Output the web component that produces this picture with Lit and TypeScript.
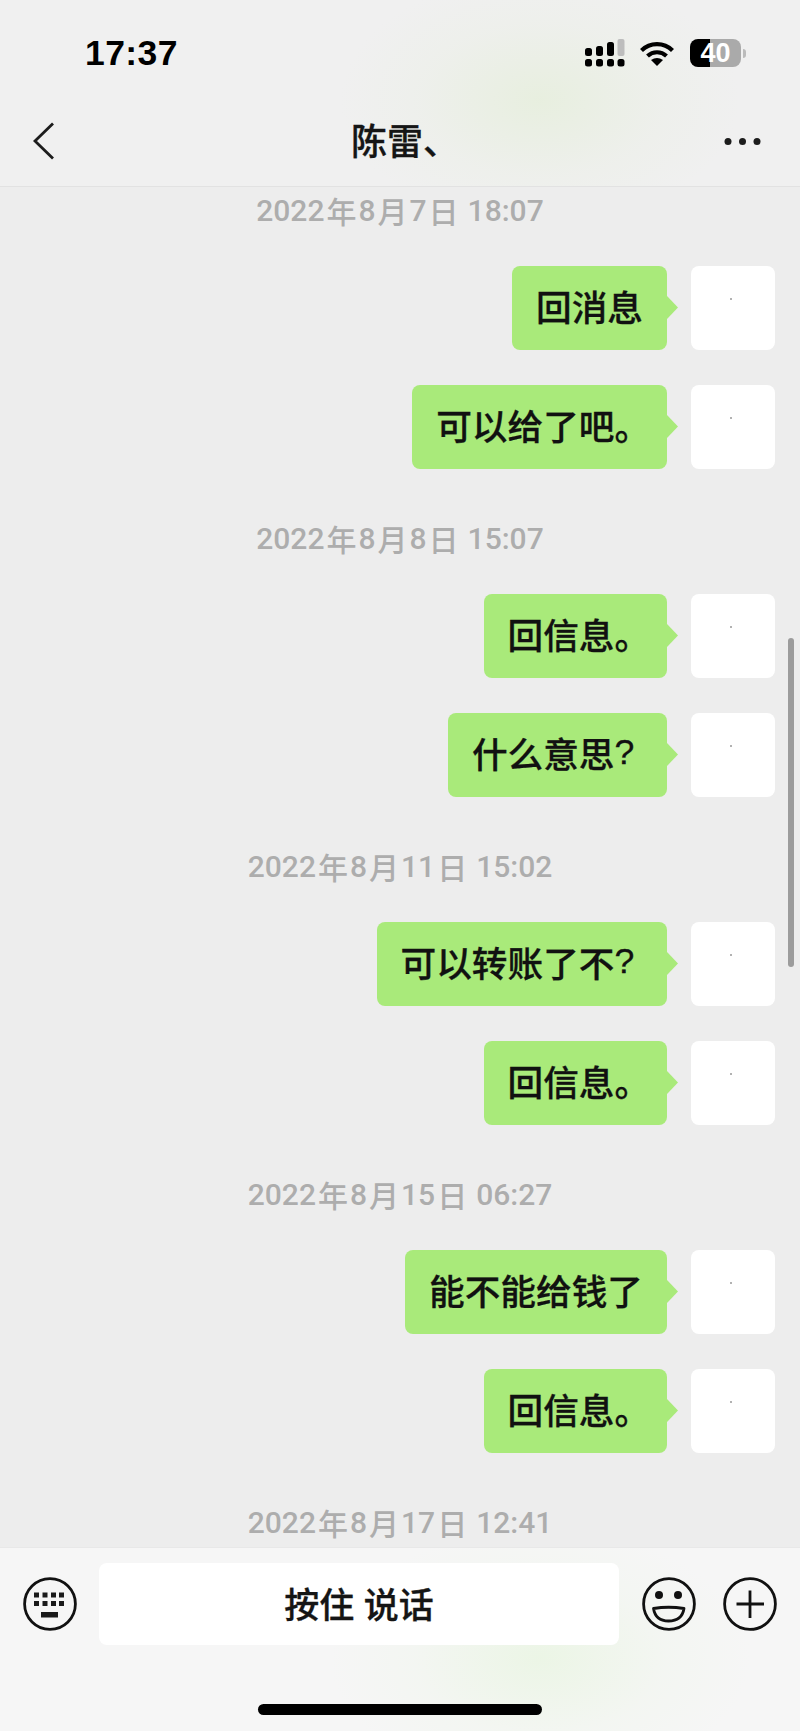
import { LitElement, html, css, svg } from "lit";
import { customElement } from "lit/decorators.js";

type Msg = { t: string; end?: string };
const groups: { ts: string[]; msgs: Msg[] }[] = [
  { ts: ["2022", "年", "8", "月", "7", "日", "18:07"], msgs: [{ t: "回消息" }, { t: "可以给了吧", end: "。" }] },
  { ts: ["2022", "年", "8", "月", "8", "日", "15:07"], msgs: [{ t: "回信息", end: "。" }, { t: "什么意思", end: "?" }] },
  { ts: ["2022", "年", "8", "月", "11", "日", "15:02"], msgs: [{ t: "可以转账了不", end: "?" }, { t: "回信息", end: "。" }] },
  { ts: ["2022", "年", "8", "月", "15", "日", "06:27"], msgs: [{ t: "能不能给钱了" }, { t: "回信息", end: "。" }] },
  { ts: ["2022", "年", "8", "月", "17", "日", "12:41"], msgs: [] },
];

@customElement("app-root")
export class AppRoot extends LitElement {
  static styles = css`
    :host {
      display: block;
      width: 800px;
      height: 1731px;
      overflow: hidden;
      font-family: "Liberation Sans", "Noto Sans CJK SC", sans-serif;
      background: #ededed;
      color: #111;
    }
    .page { position: relative; display: flex; flex-direction: column; height: 1731px; }
    .top {
      height: 186px;
      flex: none;
      border-bottom: 1px solid #e2e2e2;
      background:
        radial-gradient(ellipse 200px 125px at 540px 100px, rgba(228, 238, 216, 0.7), rgba(235, 239, 230, 0.45) 60%, rgba(240, 240, 240, 0) 100%),
        #f0f0f0;
    }
    .status { height: 106px; display: flex; align-items: center; padding: 0 54px 0 85px; }
    .time { font-size: 35.500px; font-weight: 700; color: #000; letter-spacing: 0.4px; flex: 1; }
    .signal { width: 40px; height: 28px; display: block; }
    .wifi { width: 34px; height: 25px; display: block; margin-left: 15px; }
    .battery {
      width: 51px;
      height: 28px;
      margin-left: 16px;
      border-radius: 8px;
      background: linear-gradient(90deg, #000 0 39%, #aaa 39%);
      color: #fff;
      font-size: 27px;
      font-weight: 700;
      display: flex;
      align-items: center;
      justify-content: center;
      line-height: 28px;
    }
    .nub { width: 3px; height: 9px; margin-left: 2px; background: #bbb; border-radius: 0 3px 3px 0; }
    .nav {
      height: 80px;
      box-sizing: border-box;
      padding: 0 39px 10px 33px;
      display: flex;
      align-items: center;
      justify-content: space-between;
    }
    .back { width: 22px; height: 38px; display: block; }
    .title {
      font-size: 36px;
      font-weight: 500;
      color: #151515;
      line-height: 44px;
      margin: 3px 0 0 13px;
      width: 90px;
      white-space: nowrap;
      -webkit-text-stroke: 0.3px #151515;
    }
    .dots { width: 37px; height: 9px; display: block; }
    .list { flex: 1; min-height: 0; overflow: hidden; padding-right: 25px; display: flex; flex-direction: column; }
    .ts {
      height: 46px;
      flex: none;
      display: flex;
      align-items: center;
      justify-content: center;
      gap: 2px;
      padding-left: 25px;
      font-family: Roboto, "Noto Sans CJK SC", sans-serif;
      font-size: 30px;
      font-weight: 500;
      color: #adadad;
      white-space: nowrap;
    }
    .ts .clock { margin-left: 7px; }
    .msgs { display: flex; flex-direction: column; gap: 35px; margin: 33px 0 46px; }
    .row { display: flex; justify-content: flex-end; }
    .bubble {
      position: relative;
      height: 84px;
      box-sizing: border-box;
      padding: 0 24px 6px;
      margin-right: 24px;
      display: flex;
      align-items: center;
      background: #a9ea7a;
      border-radius: 8px;
      font-size: 35.670px;
      font-weight: 500;
      color: #111;
      white-space: nowrap;
      -webkit-text-stroke: 0.3px #111;
    }
    .bubble::after {
      content: "";
      position: absolute;
      left: 100%;
      top: 30px;
      width: 11px;
      height: 23px;
      background: #a9ea7a;
      clip-path: polygon(0 0, 100% 50%, 0 100%);
    }
    .end { display: inline-block; width: 28.500px; }
    .avatar { position: relative; width: 84px; height: 84px; border-radius: 8px; background: #fff; flex: none; }
    .avatar::after {
      content: "";
      position: absolute;
      left: 39px;
      top: 32px;
      width: 2px;
      height: 2px;
      border-radius: 50%;
      background: #999;
    }
    .bar {
      flex: none;
      height: 184px;
      box-sizing: border-box;
      border-top: 1px solid #e8e8e8;
      padding-top: 15px;
      display: flex;
      flex-direction: column;
      align-items: center;
      background:
        radial-gradient(ellipse 210px 130px at 540px 110px, rgba(232, 245, 224, 0.75), rgba(241, 246, 238, 0.5) 60%, rgba(246, 246, 246, 0) 100%),
        #f6f6f6;
    }
    .controls { width: 100%; display: flex; align-items: center; padding-left: 23px; box-sizing: border-box; }
    .ico { width: 54px; height: 54px; display: block; flex: none; }
    .talk {
      width: 520px;
      height: 82px;
      margin: 0 23px 0 22px;
      padding-bottom: 3px;
      box-sizing: border-box;
      border-radius: 8px;
      background: #fff;
      display: flex;
      align-items: center;
      justify-content: center;
      font-size: 35px;
      font-weight: 500;
      color: #151515;
      flex: none;
      -webkit-text-stroke: 0.3px #151515;
    }
    .plus { margin-left: 27px; }
    .home { width: 284px; height: 11px; border-radius: 6px; background: #000; margin-top: 59px; }
    .scrollbar { position: absolute; left: 788px; top: 638px; width: 6px; height: 329px; border-radius: 3px; background: #9c9c9c; }
  `;

  private icoKeyboard() {
    const keys = [11, 19.5, 28, 36];
    return html`<svg class="ico" viewBox="0 0 54 54" fill="none">
      <circle cx="27" cy="27" r="25.400" stroke="#111" stroke-width="2.800"></circle>
      ${[15.5, 24].map((y) => keys.map((x) => svg`<rect x=${x} y=${y} width="5" height="5" fill="#1a1a1a"></rect>`))}
      <rect x="18" y="35" width="17" height="5.500" fill="#1a1a1a"></rect>
    </svg>`;
  }

  render() {
    return html`<div class="page">
      <header class="top">
        <div class="status">
          <span class="time">17:37</span>
          <svg class="signal" viewBox="0 0 40 28">
            <g fill="#000">
              <rect x="0" y="9" width="7" height="8" rx="2.500"></rect>
              <rect x="11" y="7" width="7" height="10" rx="2.500"></rect>
              <rect x="22" y="3" width="7" height="14" rx="2.500"></rect>
              <rect x="0" y="20" width="7" height="7.500" rx="2.500"></rect>
              <rect x="11" y="20" width="7" height="7.500" rx="2.500"></rect>
              <rect x="22" y="20" width="7" height="7.500" rx="2.500"></rect>
              <rect x="32.500" y="20" width="7" height="7.500" rx="2.500"></rect>
            </g>
            <rect x="32.500" y="0" width="7" height="17" rx="2" fill="#bdbdbd"></rect>
          </svg>
          <svg class="wifi" viewBox="0 0 34 25" fill="none" stroke="#000" stroke-width="4.200">
            <path d="M1.500 9.500C10 1 24 1 32.500 9.500"></path>
            <path d="M7.500 15C13 10 21 10 26.500 15"></path>
            <path d="M17 25L11 19Q17 15 23 19Z" fill="#000" stroke="none"></path>
          </svg>
          <div class="battery">40</div>
          <div class="nub"></div>
        </div>
        <div class="nav">
          <svg class="back" viewBox="0 0 22 38" fill="none" stroke="#1c1c1c" stroke-width="2.800">
            <path d="M20 1.500L2 19L20 36.500"></path>
          </svg>
          <div class="title">陈雷、</div>
          <svg class="dots" viewBox="0 0 37 9" fill="#1c1c1c">
            <circle cx="4" cy="4.500" r="3.500"></circle>
            <circle cx="18.500" cy="4.500" r="3.500"></circle>
            <circle cx="33" cy="4.500" r="3.500"></circle>
          </svg>
        </div>
      </header>
      <main class="list">
        ${groups.map(
          (g) => html`<div class="ts">
              ${g.ts.slice(0, -1).map((p) => html`<span>${p}</span>`)}
              <span class="clock">${g.ts[g.ts.length - 1]}</span>
            </div>
            ${g.msgs.length
              ? html`<div class="msgs">
                  ${g.msgs.map(
                    (m) => html`<div class="row">
                      <div class="bubble">${m.t}${m.end ? html`<span class="end">${m.end}</span>` : ""}</div>
                      <div class="avatar"></div>
                    </div>`
                  )}
                </div>`
              : ""}`
        )}
      </main>
      <footer class="bar">
        <div class="controls">
          ${this.icoKeyboard()}
          <div class="talk">按住 说话</div>
          <svg class="ico" viewBox="0 0 54 54" fill="none" stroke="#111" stroke-width="2.800">
            <circle cx="27" cy="27" r="25.400"></circle>
            <circle cx="17" cy="18" r="4" fill="#111" stroke="none"></circle>
            <circle cx="36" cy="18" r="4" fill="#111" stroke="none"></circle>
            <path d="M11.500 31.500Q26.500 29 42 31.500Q40 44 26.500 44Q13.500 44 11.500 31.500Z" stroke-linejoin="round"></path>
          </svg>
          <svg class="ico plus" viewBox="0 0 54 54" fill="none" stroke="#111" stroke-width="2.800">
            <circle cx="27" cy="27" r="25.400"></circle>
            <path d="M13.500 27H41M27 13.500V41"></path>
          </svg>
        </div>
        <div class="home"></div>
      </footer>
      <div class="scrollbar"></div>
    </div>`;
  }
}
